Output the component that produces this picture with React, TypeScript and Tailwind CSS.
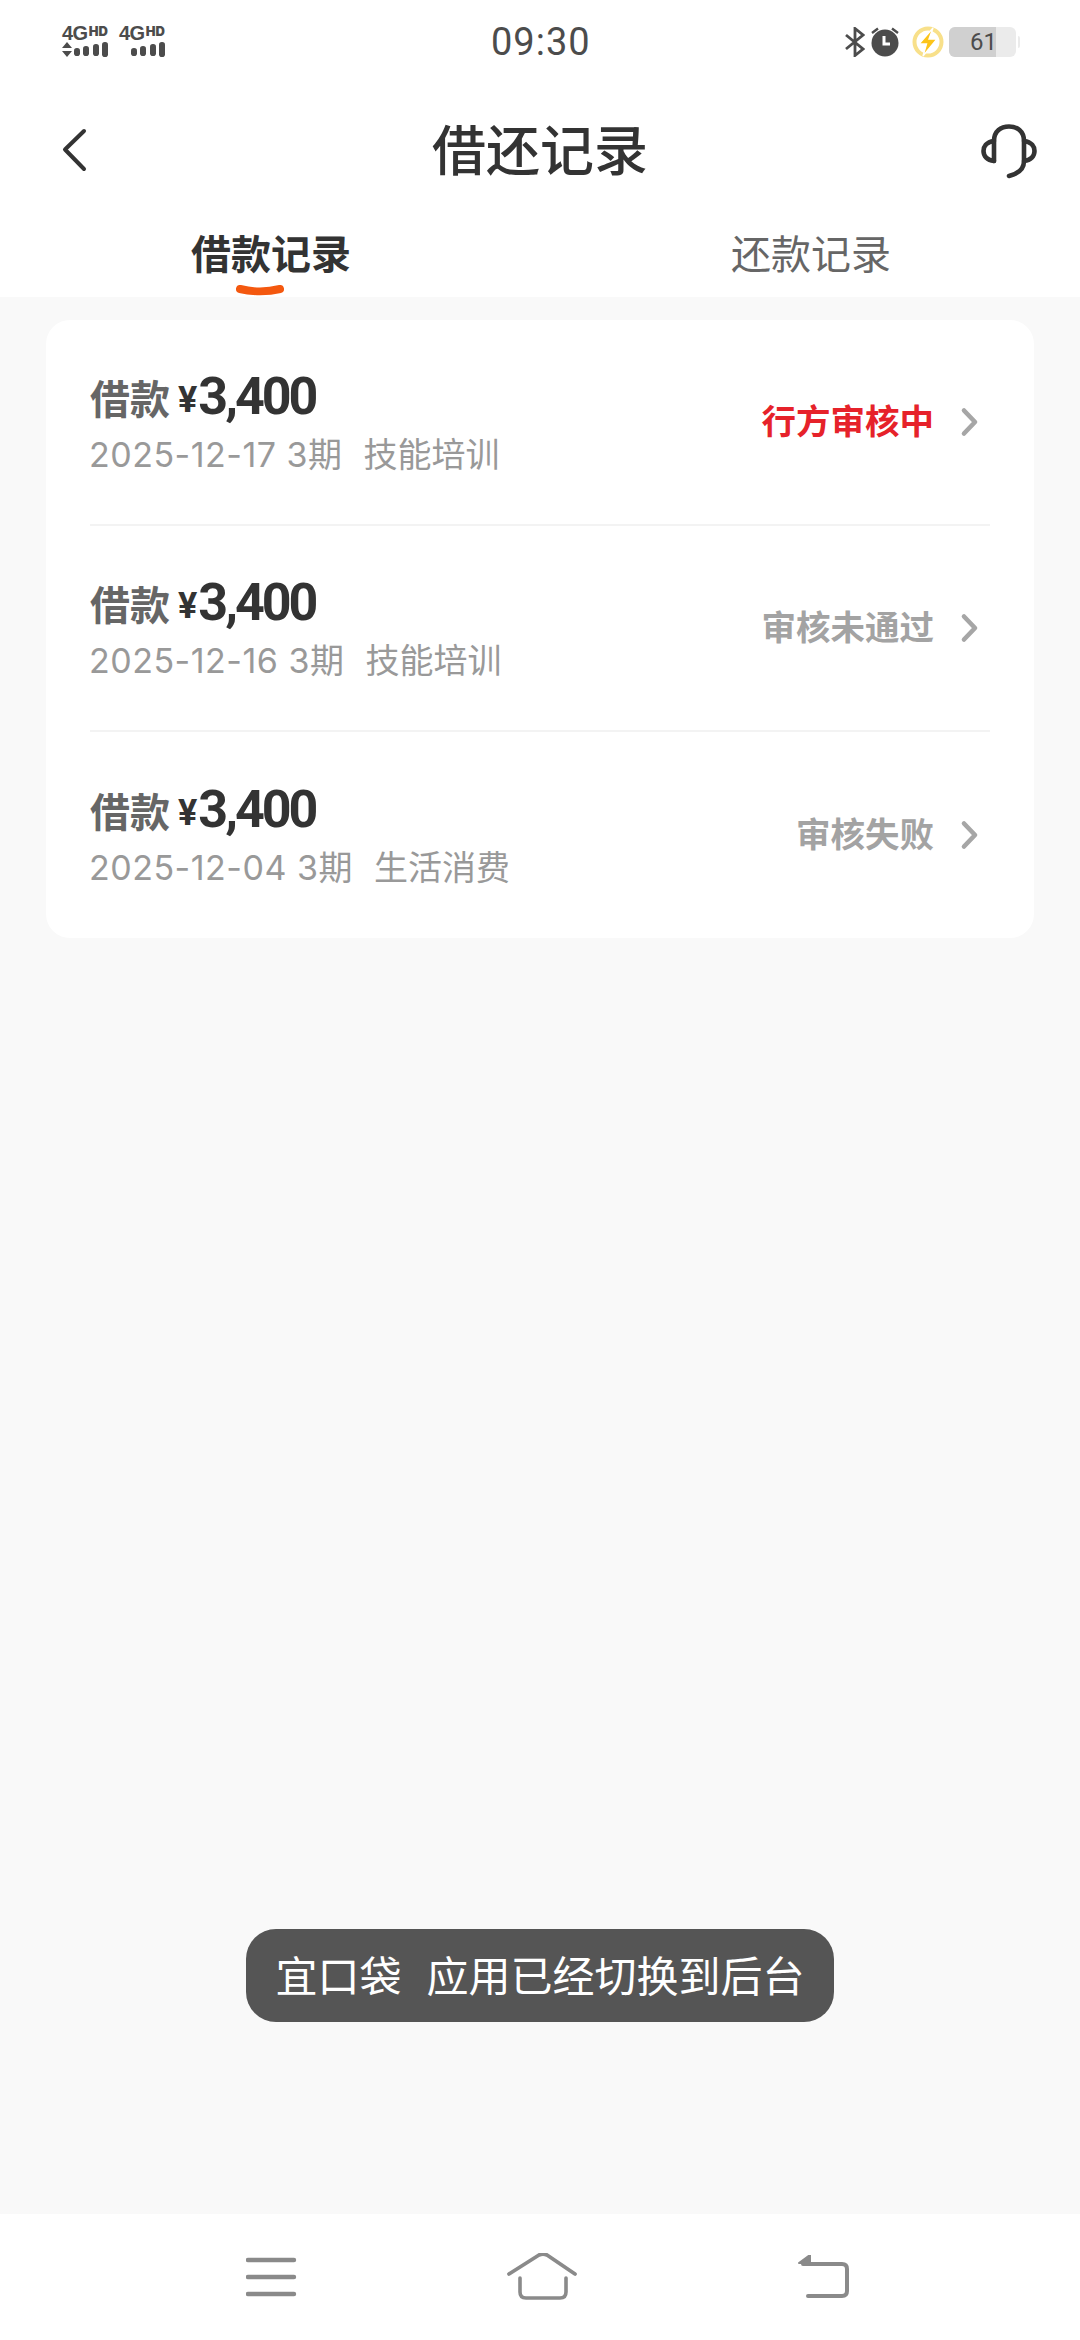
const CJK = "font-['Roboto','Noto_Sans_CJK_SC',sans-serif]";

const rows = [
  { date: "2025-12-17 3期", use: "技能培训", status: "行方审核中", color: "text-[#e6222a]" },
  { date: "2025-12-16 3期", use: "技能培训", status: "审核未通过", color: "text-[#a3a3a3]" },
  { date: "2025-12-04 3期", use: "生活消费", status: "审核失败", color: "text-[#a3a3a3]" },
];

function Signal({ arrows }: { arrows: boolean }) {
  return (
    <div className="flex w-[47px] flex-col">
      <div className="flex h-[15px] items-start font-['Liberation_Sans',sans-serif] font-bold leading-none text-[#4c4c4c]">
        <span className="text-[20px] leading-[15px] tracking-[-0.5px]">4G</span>
        <span className="ml-[1px] font-['Inter',sans-serif] text-[13px] font-black leading-[10px]">HD</span>
      </div>
      <svg width="47" height="17" viewBox="0 0 47 17" className="mt-[0px]">
        {arrows && <path d="M5 1 L10 7 H0 Z M5 16 L0 10 H10 Z" fill="#4c4c4c" />}
        <rect x="12" y="7" width="6" height="8" rx="2.8" fill="#4c4c4c" />
        <rect x="21" y="5" width="6" height="10" rx="2.8" fill="#4c4c4c" />
        <rect x="31" y="3" width="6" height="12" rx="2.8" fill="#4c4c4c" />
        <rect x="40" y="1" width="6" height="15" rx="2.8" fill="#4c4c4c" />
      </svg>
    </div>
  );
}

function StatusBar() {
  return (
    <div className="relative flex h-[75px] items-center justify-between pl-[62px] pr-[60px] pt-[8px]">
      <div className="flex gap-[10px]">
        <Signal arrows />
        <Signal arrows={false} />
      </div>
      <span className="absolute left-[491px] top-[21px] font-['Roboto',sans-serif] text-[38px] leading-[42px] tracking-[1px] text-[#4c4c4c]">
        09:30
      </span>
      <div className="flex items-center">
        <svg width="20" height="30" viewBox="0 0 20 30" fill="none" stroke="#4c4c4c" strokeWidth="2.8">
          <path d="M1 8 L18 22 L10 28.500 V1.500 L18 8 L1 22" />
        </svg>
        <svg width="30" height="31" viewBox="0 0 30 31" className="ml-[5px]">
          <circle cx="15" cy="17" r="13.500" fill="#4c4c4c" />
          <path d="M14 10 V18 H20" fill="none" stroke="#fff" strokeWidth="3" />
          <path d="M2 7 L8 2.500 M28 7 L22 2.500" stroke="#4c4c4c" strokeWidth="2.400" />
        </svg>
        <svg width="32" height="32" viewBox="0 0 32 32" className="ml-[12px]">
          <circle cx="16" cy="16" r="13.500" fill="none" stroke="#f8e08a" strokeWidth="4" />
          <path d="M21 2 L7 18 H14.500 L11 30 L25 13 H17 Z" fill="#fcc419" stroke="#fff" strokeWidth="1.400" />
        </svg>
        <div className="relative ml-[5px] flex h-[30px] w-[67px] items-center overflow-hidden rounded-[6px] bg-[#ebebeb]">
          <div className="h-full w-[47px] bg-[#d0d0d0]" />
          <span className="absolute left-[21px] top-0 font-['Roboto',sans-serif] text-[24px] leading-[31px] text-[#4c4c4c]">61</span>
        </div>
        <div className="ml-[2px] h-[12px] w-[2px] rounded-r bg-[#ebebeb]" />
      </div>
    </div>
  );
}

function Header() {
  return (
    <div className="grid h-[153px] grid-cols-[1fr_auto_1fr] items-center px-[43px] pt-[3px]">
      <svg width="26" height="44" viewBox="0 0 26 44" fill="none" stroke="#333" strokeWidth="4" strokeLinecap="round" strokeLinejoin="round" className="ml-[18px] mt-[-6px]">
        <path d="M23 3 L4 21.500 L23 41" />
      </svg>
      <h1 className="text-[54px] font-medium leading-[70px] text-[#333]">借还记录</h1>
      <svg width="56" height="56" viewBox="0 0 56 56" fill="none" stroke="#333" strokeWidth="4.600" strokeLinecap="round" className="mt-[-3px] justify-self-end">
        <path d="M13 37 V17 C13 7 20 2.500 28 2.500 C36 2.500 43 7 43 17 V37 C43 46 36 50 28 52" />
        <path d="M13 17 C5 18 2.500 23 2.500 27 C2.500 32 6 36 13 37" />
        <path d="M43 17 C51 18 53.500 23 53.500 27 C53.500 32 50 36 43 37" />
      </svg>
    </div>
  );
}

function Tabs() {
  return (
    <div className="flex h-[69px] bg-white">
      <div className="relative flex w-[542px] justify-center">
        <span className="text-[40px] font-bold leading-[56px] text-[#333]">借款记录</span>
        <svg width="48" height="14" viewBox="0 0 48 14" className="absolute left-[236px] top-[56px]">
          <path d="M4 5 C16 8 32 8 44 5" fill="none" stroke="#f4580f" strokeWidth="8" strokeLinecap="round" />
        </svg>
      </div>
      <div className="flex flex-1 justify-center">
        <span className="text-[40px] leading-[56px] text-[#666]">还款记录</span>
      </div>
    </div>
  );
}

function Row({ r, last }: { r: (typeof rows)[number]; last: boolean }) {
  return (
    <div className="px-[44px]">
      <div className={`flex h-[206px] items-center justify-between ${last ? "" : "border-b-2 border-[#f3f3f3]"}`}>
        <div className="flex flex-col pt-[2px]">
          <div className="flex h-[60px] items-end">
            <span className="text-[40px] font-bold leading-[58px] text-[#666]">借款</span>
            <span className="ml-[8px] text-[36px] font-bold leading-[60px] text-[#333]">¥</span>
            <span className="ml-[1px] text-[52px] font-bold leading-[66px] tracking-[-3px] text-[#333]">3,400</span>
          </div>
          <div className="mt-[3px] flex text-[34px] leading-[44px] text-[#999]">
            <span className="ml-[-1px] font-['Inter','Noto_Sans_CJK_SC',sans-serif] tracking-[0.5px]">{r.date}</span>
            <span className="ml-[21px]">{r.use}</span>
          </div>
        </div>
        <div className="flex items-center pr-[10px]">
          <span className={`text-[34.5px] font-bold leading-[48px] ${r.color}`}>{r.status}</span>
          <svg width="20" height="30" viewBox="0 0 20 30" fill="none" stroke="#a6a6a6" strokeWidth="4.600" strokeLinecap="round" strokeLinejoin="round" className="ml-[26px]">
            <path d="M4 3.500 L15 15 L4 26.500" />
          </svg>
        </div>
      </div>
    </div>
  );
}

function NavBar() {
  return (
    <div className="flex h-[126px] items-start bg-white pl-[246px] pt-[40px]">
      <svg width="52" height="44" viewBox="0 0 52 44">
        <g stroke="#8a8a8a" strokeWidth="4.400" strokeLinecap="round">
          <path d="M2 6 H48 M2 23 H48 M2 40 H48" />
        </g>
      </svg>
      <svg width="72" height="48" viewBox="0 0 72 48" fill="none" stroke="#8a8a8a" strokeWidth="3.600" strokeLinecap="round" strokeLinejoin="round" className="ml-[209px] mt-[-1px]">
        <path d="M2 21 L32 2 Q36 0 40 2 L68 21" strokeWidth="3.800" />
        <path d="M13 25 V39 Q13 45 19 45 H53 Q59 45 59 39 V25" />
      </svg>
      <svg width="54" height="44" viewBox="0 0 54 44" fill="none" className="ml-[218px] mt-[1px]">
        <path d="M2 8 L13 0 V8 Z" fill="#8a8a8a" stroke="#8a8a8a" strokeWidth="2" strokeLinejoin="round" />
        <path d="M6 9 H45 Q50 9 50 14 V36 Q50 41 45 41 H11" stroke="#8a8a8a" strokeWidth="4" strokeLinecap="round" />
      </svg>
    </div>
  );
}

export default function App() {
  return (
    <div className={`relative flex h-[2340px] w-[1080px] flex-col bg-[#f9f9f9] ${CJK}`}>
      <div className="bg-white">
        <StatusBar />
        <Header />
        <Tabs />
      </div>
      <div className="flex-1 px-[46px] pt-[23px]">
        <div className="overflow-hidden rounded-[24px] bg-white">
          {rows.map((r, i) => (
            <Row key={r.date} r={r} last={i === rows.length - 1} />
          ))}
        </div>
      </div>
      <NavBar />
      <div className="absolute left-[246px] top-[1929px] flex h-[93px] w-[588px] items-center justify-center gap-[25px] rounded-[30px] bg-[#555] pt-[4px] text-[42px] leading-none text-white">
        <span>宜口袋</span>
        <span>应用已经切换到后台</span>
      </div>
    </div>
  );
}
